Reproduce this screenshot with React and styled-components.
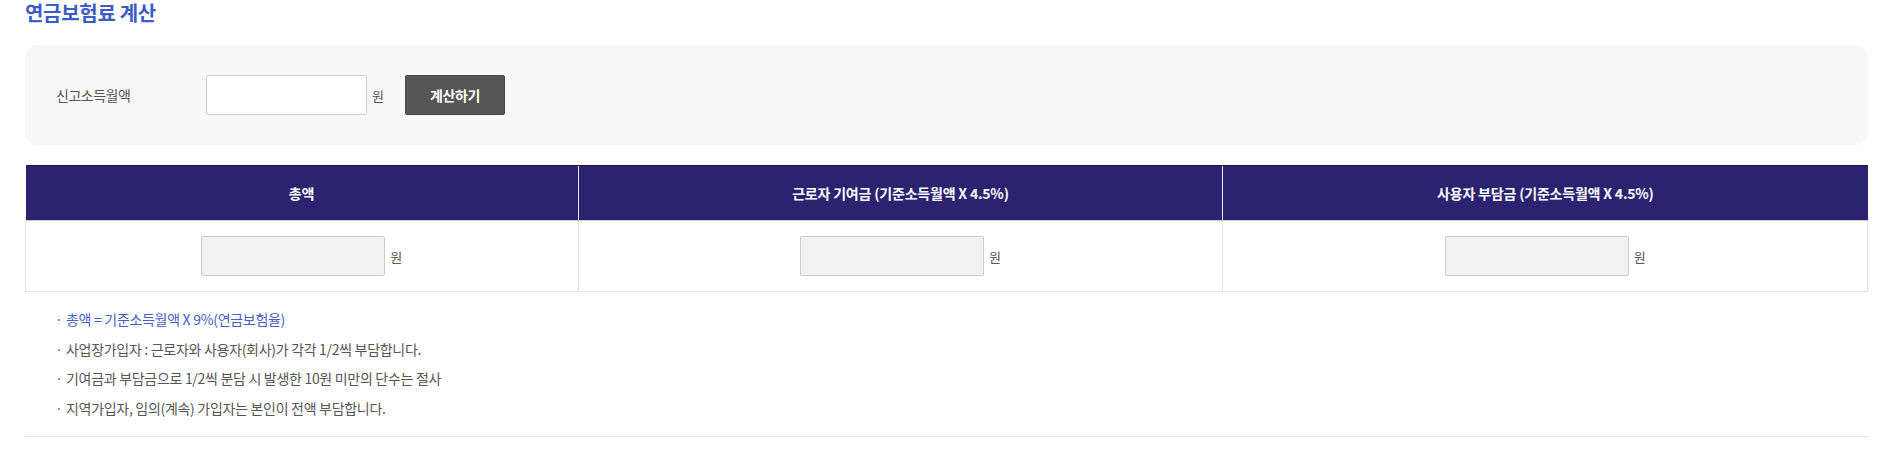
import React from 'react';
import styled, { createGlobalStyle } from 'styled-components';

const GlobalStyle = createGlobalStyle`
  * { box-sizing: border-box; }
  body {
    margin: 0;
    background: #fff;
    font-family: "Noto Sans CJK KR", "Noto Sans", sans-serif;
    color: #555;
  }
`;

const Page = styled.div`
  padding: 0 15px 0 25px;
`;

const Title = styled.h2`
  margin: 0 0 19px;
  font-size: 20px;
  line-height: 26px;
  font-weight: 700;
  color: #3d5bc6;
  letter-spacing: -0.3px;
`;

const InputPanel = styled.div`
  display: flex;
  align-items: center;
  height: 100px;
  padding-left: 31px;
  background: #f8f8f8;
  border-radius: 12px;
`;

const Label = styled.span`
  width: 150px;
  font-size: 14px;
  color: #555;
  letter-spacing: -0.5px;
`;

const Field = styled.input`
  width: ${(p) => p.$width}px;
  height: 40px;
  border: 1px solid #ccc;
  border-radius: 2px;
  background: ${(p) => (p.readOnly ? '#f1f1f1' : '#fff')};
  font-family: inherit;
  font-size: 13px;
  padding: 0 8px;
  outline: none;
`;

const Unit = styled.span`
  margin-left: 5px;
  font-size: 13px;
  color: #555;
`;

const CalcButton = styled.button`
  margin-left: 21px;
  width: 100px;
  height: 40px;
  border: 1px solid #444;
  border-radius: 2px;
  background: #555655;
  color: #fff;
  font-family: inherit;
  font-size: 14px;
  font-weight: 700;
  letter-spacing: -0.4px;
  cursor: pointer;
`;

const ResultTable = styled.table`
  width: 100%;
  margin-top: 20px;
  border-collapse: collapse;
  table-layout: fixed;
`;

const HeadCell = styled.th`
  height: 55px;
  padding: 0;
  background: #2b2270;
  color: #fff;
  font-size: 14px;
  font-weight: 700;
  letter-spacing: -0.2px;
  border-top: 1px solid #1e1858;
  border-bottom: 1px solid #c9c9c9;
  border-left: 1px solid #e8e8f0;
  &:first-child { border-left: none; }
`;

const BodyCell = styled.td`
  height: 71px;
  padding: 0;
  border: 1px solid #e3e3e3;
  border-top: none;
`;

const CellInner = styled.div`
  display: flex;
  align-items: center;
  justify-content: center;
`;

const Notes = styled.ul`
  list-style: none;
  margin: 0;
  padding: 13px 0 13px 30px;
  border-bottom: 1px solid #e3e3e3;
`;

const Note = styled.li`
  display: flex;
  font-size: 14px;
  line-height: 29.6px;
  letter-spacing: -0.3px;
  color: ${(p) => (p.$accent ? '#4560c6' : '#555')};
  &::before {
    content: '·';
    width: 11px;
    color: #777;
  }
`;

const columns = [
  { title: '총액', width: '30%' },
  { title: '근로자 기여금 (기준소득월액 X 4.5%)', width: '35%' },
  { title: '사용자 부담금 (기준소득월액 X 4.5%)', width: '35%' },
];

const notes = [
  '총액 = 기준소득월액 X 9%(연금보험율)',
  '사업장가입자 : 근로자와 사용자(회사)가 각각 1/2씩 부담합니다.',
  '기여금과 부담금으로 1/2씩 분담 시 발생한 10원 미만의 단수는 절사',
  '지역가입자, 임의(계속) 가입자는 본인이 전액 부담합니다.',
];

export default function App() {
  return (
    <Page>
      <GlobalStyle />
      <Title>연금보험료 계산</Title>
      <InputPanel>
        <Label>신고소득월액</Label>
        <Field $width={161} type="text" />
        <Unit>원</Unit>
        <CalcButton type="button">계산하기</CalcButton>
      </InputPanel>

      <ResultTable>
        <colgroup>
          {columns.map((c) => (
            <col key={c.title} style={{ width: c.width }} />
          ))}
        </colgroup>
        <thead>
          <tr>
            {columns.map((c) => (
              <HeadCell key={c.title}>{c.title}</HeadCell>
            ))}
          </tr>
        </thead>
        <tbody>
          <tr>
            {columns.map((c) => (
              <BodyCell key={c.title}>
                <CellInner>
                  <Field $width={184} type="text" readOnly />
                  <Unit>원</Unit>
                </CellInner>
              </BodyCell>
            ))}
          </tr>
        </tbody>
      </ResultTable>

      <Notes>
        {notes.map((n, i) => (
          <Note key={n} $accent={i === 0}>
            {n}
          </Note>
        ))}
      </Notes>
    </Page>
  );
}
